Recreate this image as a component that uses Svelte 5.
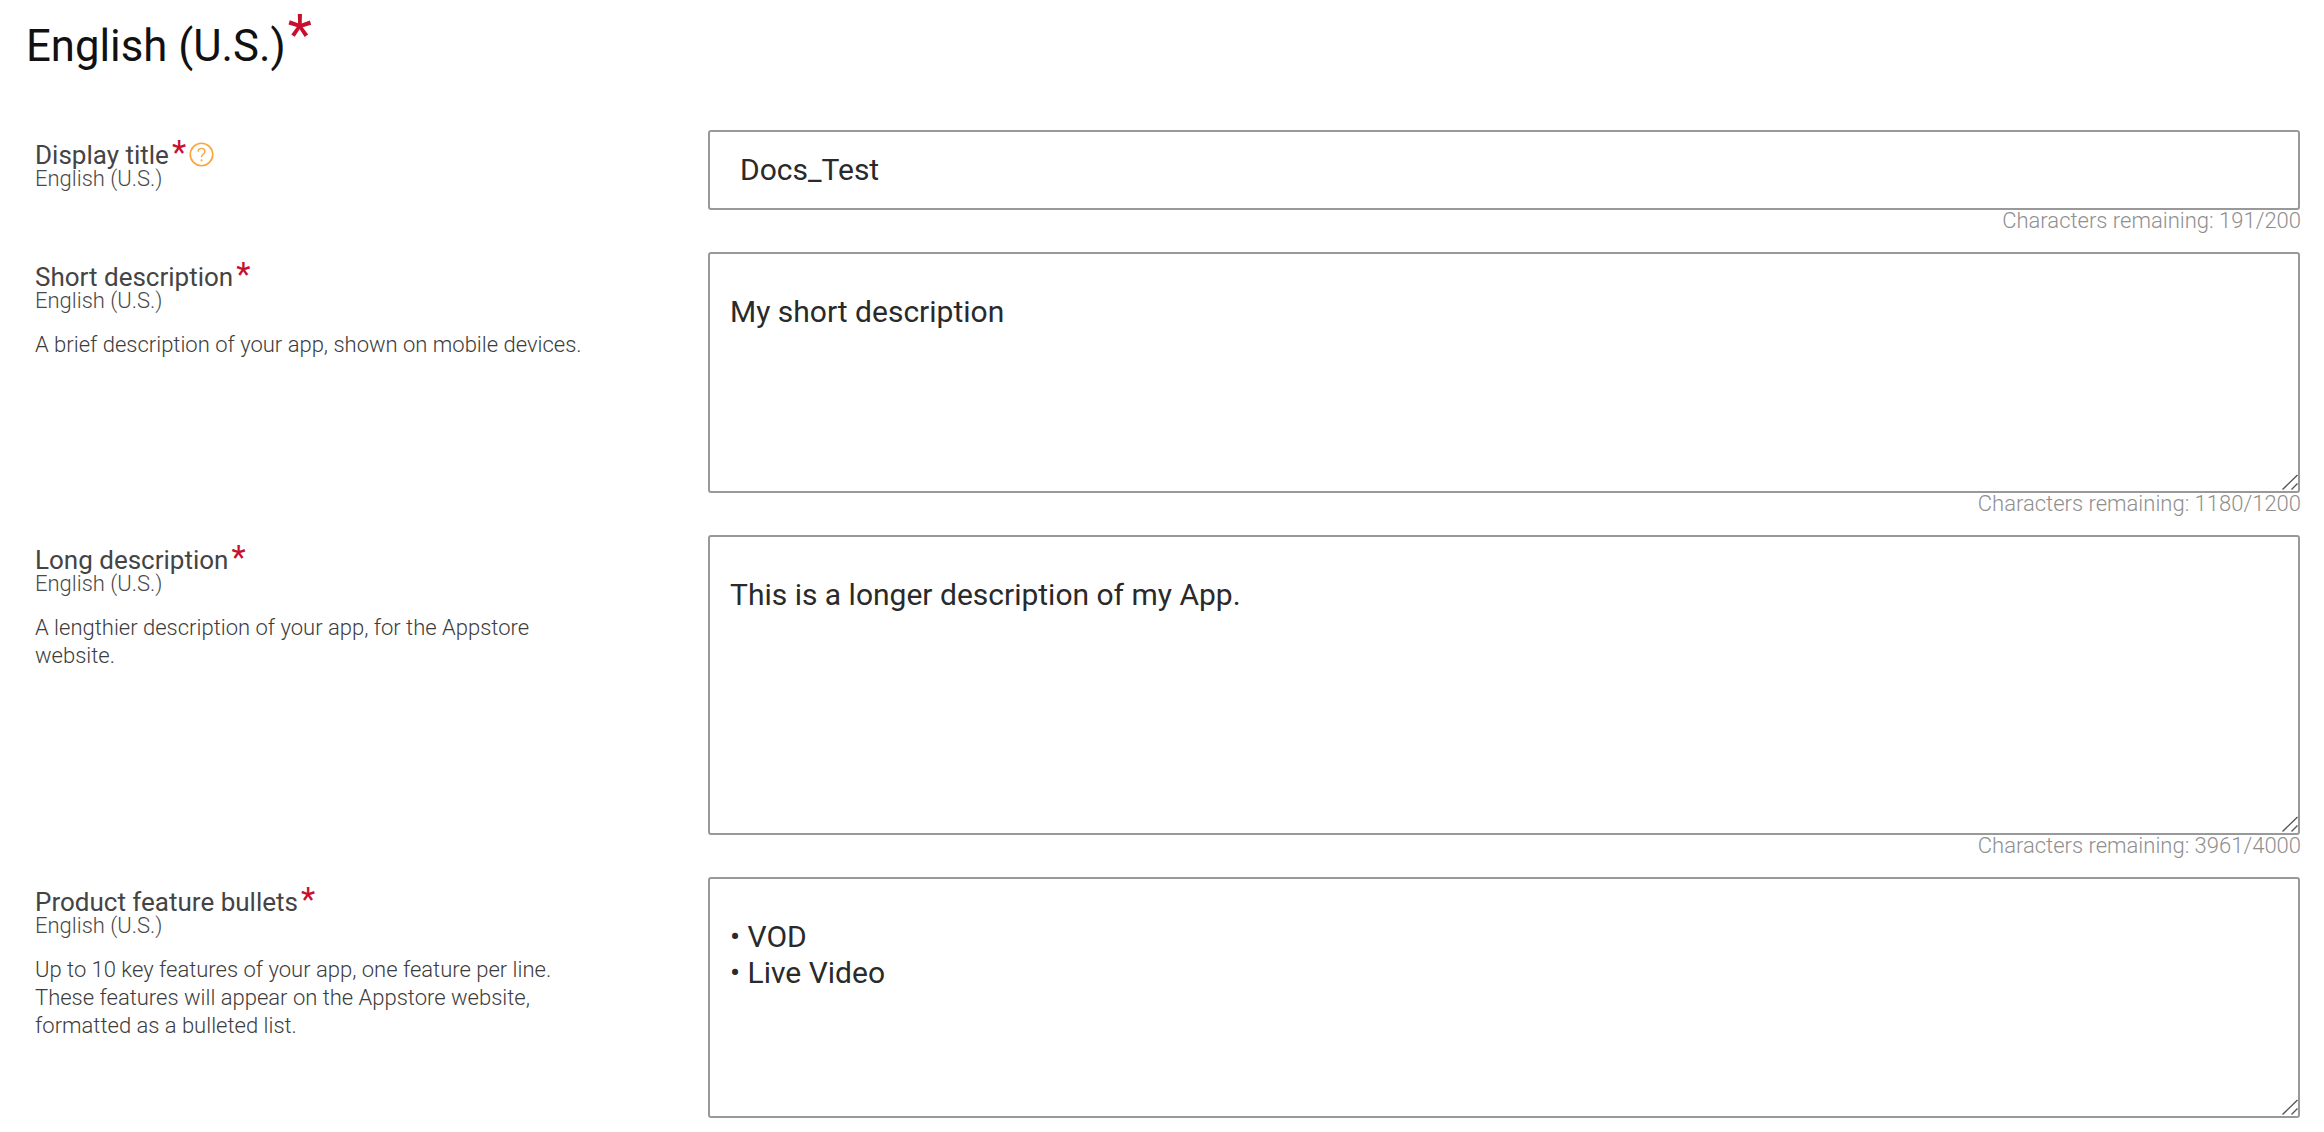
<script lang="ts">
  const rows = [
    {
      label: "Display title",
      help: true,
      value: "Docs_Test",
      remaining: "191/200",
      single: true,
      height: 80,
      lines: [],
    },
    {
      label: "Short description",
      value: "My short description",
      remaining: "1180/1200",
      height: 241,
      lines: ["A brief description of your app, shown on mobile devices."],
    },
    {
      label: "Long description",
      value: "This is a longer description of my App.",
      remaining: "3961/4000",
      height: 300,
      lines: ["A lengthier description of your app, for the Appstore", "website."],
    },
    {
      label: "Product feature bullets",
      value: "• VOD\n• Live Video",
      height: 241,
      lines: [
        "Up to 10 key features of your app, one feature per line.",
        "These features will appear on the Appstore website,",
        "formatted as a bulleted list.",
      ],
    },
  ];
</script>

<main class="page">
  <h1 class="title">English (U.S.)<span class="star">*</span></h1>

  {#each rows as row}
    <section class="row">
      <div class="info">
        <div class="label">
          {row.label}<span class="req">*</span>
          {#if row.help}
            <svg class="help" viewBox="0 0 24 24" width="25" height="25" aria-hidden="true">
              <circle cx="12" cy="12" r="10.8" fill="none" stroke="#f9a73e" stroke-width="1.6" />
              <path d="M8.8 9.4c0-2 1.4-3.3 3.3-3.3s3.2 1.2 3.2 2.9c0 2.5-3.2 2.7-3.2 5.6" fill="none" stroke="#f9a73e" stroke-width="1.4" />
              <circle cx="12.1" cy="17.6" r="1" fill="#f9a73e" />
            </svg>
          {/if}
        </div>
        <div class="locale">English (U.S.)</div>
        {#if row.lines.length}
          <p class="desc">
            {#each row.lines as line}<span>{line}</span>{/each}
          </p>
        {/if}
      </div>
      <div class="field">
        {#if row.single}
          <input class="box single" style={`height: ${row.height}px`} value={row.value} />
        {:else}
          <div class="area">
            <textarea class="box" style={`height: ${row.height}px`} value={row.value}></textarea>
            <svg class="grip" viewBox="0 0 16 16" width="16" height="16" aria-hidden="true">
              <path d="M0.5 15.5 15.5 1M9.5 15.5 15.5 9.5" fill="none" stroke="#555" stroke-width="1.4" />
            </svg>
          </div>
        {/if}
        {#if row.remaining}
          <div class="count">Characters remaining: {row.remaining}</div>
        {/if}
      </div>
    </section>
  {/each}
</main>

<style>
  :global(body) {
    margin: 0;
    background: #fff;
  }

  .page {
    height: 1132px;
    padding: 0 24px 0 26px;
    box-sizing: border-box;
    overflow: hidden;
    font-family: Roboto, "Liberation Sans", sans-serif;
  }

  .title {
    height: 130px;
    margin: 0;
    padding-top: 20px;
    box-sizing: border-box;
    color: #111;
    font-size: 43.7px;
    font-weight: 400;
    line-height: 52px;
  }

  .star {
    position: relative;
    top: -7px;
    margin-left: 2px;
    color: #c8102e;
    font-size: 56px;
    line-height: 0;
  }

  .row {
    display: grid;
    grid-template-columns: 682px 1fr;
  }

  .info {
    padding: 11px 0 0 9px;
  }

  .label {
    display: flex;
    align-items: flex-start;
    height: 26px;
    color: #444;
    font-size: 26px;
    line-height: 28px;
  }

  .req {
    margin-left: 3px;
    color: #c8102e;
    font-size: 33px;
    line-height: 24px;
  }

  .help {
    margin: 1px 0 0 3px;
  }

  .locale {
    color: #4a4a4a;
    font-size: 22px;
    font-weight: 300;
    line-height: 24px;
  }

  .desc {
    display: flex;
    flex-direction: column;
    margin: 18px 0 0;
    color: #3c3c3c;
    font-size: 22px;
    font-weight: 300;
    line-height: 28px;
  }

  .area {
    position: relative;
  }

  .grip {
    position: absolute;
    right: 2px;
    bottom: 3px;
    pointer-events: none;
  }

  .box {
    display: block;
    width: 100%;
    padding: 40px 20px 0;
    box-sizing: border-box;
    border: 2px solid #999;
    border-radius: 3px;
    background: #fff;
    color: #2a2a2a;
    font-family: inherit;
    font-size: 30px;
    line-height: 36px;
    outline: none;
    resize: none;
  }

  .single {
    padding: 0 30px 2px;
  }

  .count {
    height: 42px;
    margin-right: -1px;
    color: #8f8f8f;
    font-size: 22px;
    font-weight: 300;
    line-height: 22px;
    text-align: right;
  }
</style>
